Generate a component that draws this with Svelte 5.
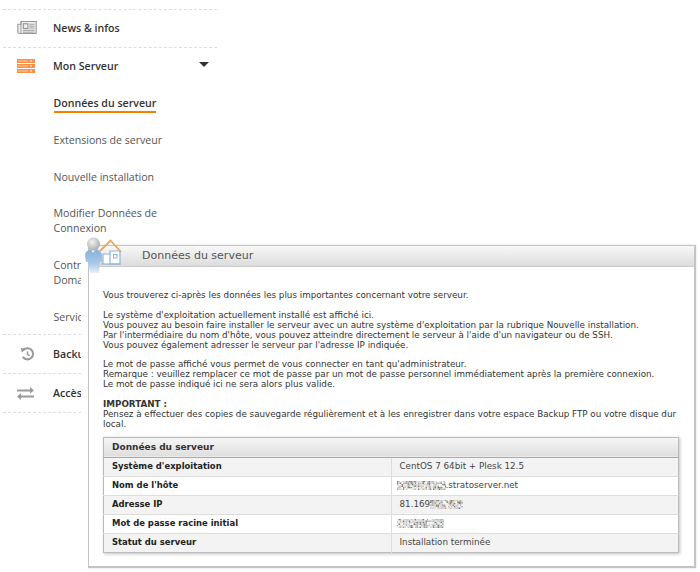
<script>
    const subItems = [
        { label: "Données du serveur", active: true },
        { label: "Extensions de serveur" },
        { label: "Nouvelle installation" },
        { label: "Modifier Données de Connexion" },
        { label: "Contrats de Noms de Domaine" },
        { label: "Services" }
    ];

    const rows = [
        { name: "Système d'exploitation", value: "CentOS 7 64bit + Plesk 12.5" },
        { name: "Nom de l'hôte", after: ".stratoserver.net", noise: 49 },
        { name: "Adresse IP", value: "81.169", noise: 33 },
        { name: "Mot de passe racine initial", noise: 47 },
        { name: "Statut du serveur", value: "Installation terminée" }
    ];

    const noiseColors = ["#b9b9b9", "#e6e6e6", "#8f8f8f", "#f2f2f2", "#d9b9d4", "#bcd2b4", "#a5a5a5", "#ffffff", "#e9d7a8", "#c4cfe6", "#7d7d7d", "#dcdcdc"];

    // redacted parts of the screenshot, small scattered dots
    function dots(width) {
        const out = [];
        for (let x = 0; x < width; x += 1.5) {
            for (let y = 0; y < 9; y += 1.5) {
                const n = Math.floor(Math.abs(Math.sin(x * 12.9 + y * 78.2 + width) * 43758.5)) % noiseColors.length;
                out.push({ x, y, fill: noiseColors[n] });
            }
        }
        return out;
    }
</script>

<div class="page">
    <nav class="menu">
        <div class="item">
            <svg class="icon" width="20" height="13" viewBox="0 0 21 14">
                <path d="M4 .6h16.400v12.800H2.500C1.400 13.400.6 12.700.6 11.500V3.500H4z" fill="#eee" stroke="#999" stroke-width="1.200"/>
                <path d="M4 1v12" stroke="#999"/>
                <rect x="6.500" y="3" width="5" height="5" fill="none" stroke="#888"/>
                <path d="M13 3.500h5.500M13 5.500h5.500M13 7.500h5.500M6 10h12.500M6 12h12.500" stroke="#999"/>
            </svg>
            <span>News &amp; infos</span>
        </div>
        <div class="item open">
            <svg class="icon" width="18" height="14" viewBox="0 0 18 14">
                <rect width="18" height="4" fill="#fb8f47"/>
                <rect y="5" width="18" height="4" fill="#fb8f47"/>
                <rect y="10" width="18" height="4" fill="#fb8f47"/>
                <path d="M1 2h10M1 7h10M1 12h10" stroke="#fdc9a3"/>
                <path d="M14 1v2M14 6v2M14 11v2" stroke="#fff"/>
            </svg>
            <span>Mon Serveur</span>
            <i class="caret"></i>
        </div>
        <ul class="sub">
            {#each subItems as sub}
                <li class:active={sub.active}><span>{sub.label}</span></li>
            {/each}
        </ul>
        <div class="item">
            <svg class="icon history" width="15" height="14" viewBox="0 0 16 15">
                <path d="M3.200 3.600A6 6 0 1 1 3 10.600" fill="none" stroke="#999" stroke-width="2.200"/>
                <path d="M.8 1.200l5.600.6-4.400 4.200z" fill="#999"/>
                <path d="M8 4.500v3.400l2.400 1.400" fill="none" stroke="#999" stroke-width="1.500"/>
            </svg>
            <span>Backup</span>
        </div>
        <div class="item">
            <svg class="icon" width="17" height="13" viewBox="0 0 17 13">
                <path d="M0 2.500h13V0l4 3.500-4 3V4.500H0z" fill="#999"/>
                <path d="M17 8.500H4V6L0 9.500 4 13v-2.500h13z" fill="#999"/>
            </svg>
            <span>Accès</span>
        </div>
    </nav>

    <section class="window">
        <svg class="badge" width="38" height="38" viewBox="0 0 38 38">
            <defs>
                <linearGradient id="body" x1="0" y1="0" x2="0" y2="1">
                    <stop offset="0" stop-color="#86b0da"/>
                    <stop offset="0.6" stop-color="#a9c8e6"/>
                    <stop offset="1" stop-color="#e6eff8"/>
                </linearGradient>
                <radialGradient id="head" cx="0.4" cy="0.35" r="0.7">
                    <stop offset="0" stop-color="#f2f2f2"/>
                    <stop offset="1" stop-color="#a9a9a9"/>
                </radialGradient>
            </defs>
            <path d="M0 19c0-4 3-6 5.500-7L8 16l3-4c3 1 6 3 6 7v6h-2l-1 11H5L3 25H1z" fill="url(#body)"/>
            <circle cx="8.500" cy="7" r="6.500" fill="url(#head)"/>
            <path d="M15 14L25.500 3.500 36 15" fill="none" stroke="#eba45a" stroke-width="1.800"/>
            <path d="M18 27V17h7v10M25 27V14h10v13z" fill="#fff" stroke="#8fb6dc" stroke-width="1.200"/>
            <rect x="28.500" y="17.500" width="3.500" height="3.500" fill="none" stroke="#8fb6dc"/>
            <path d="M16 27h20" stroke="#8fb6dc" stroke-width="1.200"/>
        </svg>
        <header class="title">Données du serveur</header>
        <div class="content">
            <p>Vous trouverez ci-après les données les plus importantes concernant votre serveur.</p>
            <p>Le système d'exploitation actuellement installé est affiché ici.<br>
            Vous pouvez au besoin faire installer le serveur avec un autre système d'exploitation par la rubrique Nouvelle installation.<br>
            Par l'intermédiaire du nom d'hôte, vous pouvez atteindre directement le serveur à l'aide d'un navigateur ou de SSH.<br>
            Vous pouvez également adresser le serveur par l'adresse IP indiquée.</p>
            <p>Le mot de passe affiché vous permet de vous connecter en tant qu'administrateur.<br>
            Remarque : veuillez remplacer ce mot de passe par un mot de passe personnel immédiatement après la première connexion.<br>
            Le mot de passe indiqué ici ne sera alors plus valide.</p>
            <p><b>IMPORTANT :</b><br>
            Pensez à effectuer des copies de sauvegarde régulièrement et à les enregistrer dans votre espace Backup FTP ou votre disque dur local.</p>

            <table>
                <thead>
                    <tr><th colspan="2">Données du serveur</th></tr>
                </thead>
                <tbody>
                    {#each rows as row, i}
                        <tr class:odd={i % 2 === 0}>
                            <td class="name">{row.name}</td>
                            <td class="value" class:masked={!row.value}>
                                <div class="cell">
                                    {#if row.value}<span>{row.value}</span>{/if}
                                    {#if row.noise}
                                        <svg width={row.noise} height="9">
                                            {#each dots(row.noise) as d}
                                                <rect x={d.x} y={d.y} width="1.500" height="1.500" fill={d.fill}/>
                                            {/each}
                                        </svg>
                                    {/if}
                                    {#if row.after}<span>{row.after}</span>{/if}
                                </div>
                            </td>
                        </tr>
                    {/each}
                </tbody>
            </table>
        </div>
    </section>
</div>

<style>
    :global(body) {
        margin: 0;
        background: #fff;
    }

    .page {
        position: relative;
        width: 700px;
        height: 572px;
        overflow: hidden;
        padding-top: 9px;
        box-sizing: border-box;
    }

    .menu {
        width: 214px;
        margin-left: 3px;
        font-family: "Open Sans", sans-serif;
        font-size: 10.6px;
        border-bottom: 1px dashed #ddd;
    }

    .item {
        position: relative;
        box-sizing: border-box;
        height: 38px;
        padding-bottom: 2px;
        display: flex;
        align-items: center;
        border-top: 1px dashed #ddd;
        color: #333;
        font-weight: 600;
    }

    .sub + .item,
    .sub + .item + .item {
        height: 39px;
        padding-bottom: 0;
    }

    .icon {
        position: absolute;
        left: 14px;
    }

    .history {
        left: 17px;
    }

    .item span {
        margin-left: 50px;
    }

    .caret {
        position: absolute;
        right: 8px;
        top: 14px;
        border: 5px solid transparent;
        border-top: 5px solid #333;
        border-bottom: 0;
    }

    .sub {
        list-style: none;
        margin: 0;
        padding: 11px 40px 9.500px 50.500px;
        display: flex;
        flex-direction: column;
        gap: 21.800px;
        color: #555;
        line-height: 15px;
    }

    .sub li.active span {
        color: #333;
        font-weight: 600;
        padding-bottom: 1px;
        border-bottom: 2px solid #f77f00;
    }

    .window {
        position: absolute;
        left: 88px;
        top: 245px;
        width: 605px;
        height: 320px;
        background: #fff;
        border: 2px solid #c4c4c4;
        border-top-width: 1px;
        border-left-width: 1px;
        box-shadow: -7px 0 0 #fff, 0 0 2px rgba(0, 0, 0, 0.15);
        font-family: "DejaVu Sans", Verdana, sans-serif;
        color: #333;
    }

    .badge {
        position: absolute;
        left: -4px;
        top: -9px;
    }

    .title {
        height: 20px;
        line-height: 20px;
        padding-left: 53px;
        font-size: 11px;
        color: #555;
        background: linear-gradient(#f8f8f8, #dcdcdc);
        border-bottom: 1px solid #ccc;
    }

    .content {
        padding: 24px 14px 0;
        font-size: 8.750px;
        line-height: 9.900px;
    }

    p {
        margin: 0 0 9.900px;
    }

    table {
        margin-top: -3px;
        width: 576px;
        border-collapse: collapse;
        table-layout: fixed;
        box-shadow: 1px 1px 3px rgba(0, 0, 0, 0.25);
        border: 1px solid #bbb;
    }

    th {
        height: 18px;
        padding: 1px 0 0 8px;
        text-align: left;
        font-size: 9px;
        color: #333;
        background: linear-gradient(#f6f6f6, #dedede);
        border-bottom: 1px solid #aaa;
    }

    td {
        height: 18px;
        padding: 0;
        border-top: 1px solid #ddd;
        white-space: nowrap;
    }

    .odd td {
        background: #f3f3f3;
    }

    .name {
        width: 281px;
        padding-left: 8px;
        font-size: 8.450px;
        font-weight: 700;
        color: #222;
        border-right: 1px solid #ddd;
    }

    .value {
        padding-left: 8px;
        color: #444;
    }

    .cell {
        display: flex;
        align-items: center;
    }

    .masked .cell {
        margin-left: -3px;
    }
</style>
